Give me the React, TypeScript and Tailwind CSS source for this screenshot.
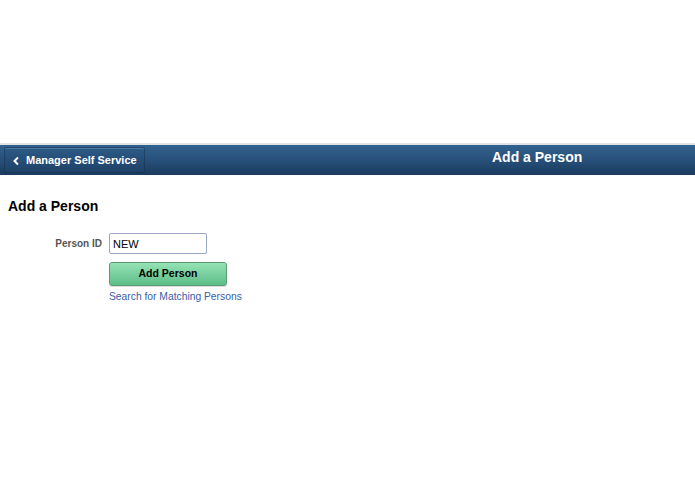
export default function App() {
  return (
    <div className="w-[695px] h-[494px] bg-white" style={{ fontFamily: "Arial, 'Liberation Sans', sans-serif" }}>
      <div className="h-[143px]" />
      <div className="h-[2px] bg-[#dfe3e8]" />
      {/* banner */}
      <div className="relative h-[30px] bg-gradient-to-b from-[#32628f] via-[#27507a] to-[#1b3a5e] flex items-center">
        <button className="ml-[5px] h-[24px] w-[139px] flex items-center gap-[6px] pl-[7px] whitespace-nowrap rounded-[2px] bg-gradient-to-b from-[#2c5985] to-[#1f4268] border-t border-[#4d79a3] shadow-[0_0_0_1px_rgba(20,45,75,0.5)]">
          <svg width="8" height="10" viewBox="0 0 8 10" fill="none">
            <path d="M6 1.5 L2.5 5 L6 8.5" stroke="white" strokeWidth="2" />
          </svg>
          <span className="text-white text-[11px] font-bold">Manager Self Service</span>
        </button>
        <div className="absolute left-[492px] top-[2px] text-white text-[14px] font-bold">Add a Person</div>
      </div>
      <div className="px-[8px] pt-[23px]">
        <h1 className="text-[14px] font-bold text-black leading-[17px]">Add a Person</h1>
        <div className="mt-[18px] flex items-center">
          <label className="w-[101px] pr-[7px] text-right text-[10px] font-bold text-[#555]">Person ID</label>
          <input
            defaultValue="NEW"
            className="w-[98px] h-[21px] border border-[#9aa6c6] rounded-[2px] px-[3px] text-[11px] text-black outline-none"
          />
        </div>
        <div className="ml-[101px] mt-[6px]">
          <button className="w-[118px] h-[24px] rounded-[3px] border border-[#5a9b72] bg-gradient-to-b from-[#95e2b4] to-[#5cbd88] text-[10.5px] font-bold text-black shadow-[0_1px_1px_rgba(0,0,0,0.15)]">
            Add Person
          </button>
          <div className="mt-[2px] leading-[14px]">
            <a className="text-[10.3px] text-[#3b5ea8]">Search for Matching Persons</a>
          </div>
        </div>
      </div>
    </div>
  );
}
